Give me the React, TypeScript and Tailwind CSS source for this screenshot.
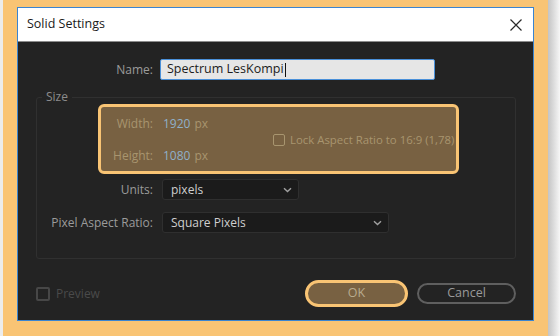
import React from "react"

const font = { fontFamily: '"Open Sans", "Noto Sans", Arial, sans-serif' }

function Chevron() {
  return (
    <svg width="9" height="6" viewBox="0 0 9 6" className="shrink-0">
      <path d="M1 1.2 L4.5 4.6 L8 1.2" fill="none" stroke="#a0a0a0" strokeWidth="1.4" />
    </svg>
  )
}

function Select({ value, width }: { value: string; width: string }) {
  return (
    <div
      className={`${width} h-[21px] flex items-center justify-between pl-[8px] pr-[6px] bg-[#1b1b1b] border border-[#2f2f2f] rounded-[3px] text-[12px] text-[#cfcfcf]`}
    >
      <span>{value}</span>
      <Chevron />
    </div>
  )
}

export default function App() {
  return (
    <div className="flex w-[560px] h-[336px] overflow-hidden" style={font}>
      <div className="w-[3px] bg-[#ececec]" />
      <div className="flex-1 bg-[#f9c474] pl-[14px] pt-[7px]">
        <div className="w-[517px] h-[314px] border border-[#3a84d0] flex flex-col">
          {/* title bar */}
          <div className="h-[34px] bg-white border-b border-[#8c8c8c] flex items-center justify-between pl-[9px] pr-[11px]">
            <span className="text-[12.5px] text-[#1a1a1a]">Solid Settings</span>
            <svg width="12" height="12" viewBox="0 0 12 12">
              <path d="M0.5 0.5 L11.5 11.5 M11.5 0.5 L0.5 11.5" stroke="#2a2a2a" strokeWidth="1.2" />
            </svg>
          </div>

          {/* body */}
          <div className="flex-1 bg-[#232323] flex flex-col pt-[17px] pl-[18px] pr-[17px]">
            <div className="flex items-center">
              <span className="w-[117px] text-right text-[12px] text-[#9b9b9b]">Name:</span>
              <div className="ml-[7px] w-[275px] h-[21px] flex items-center bg-[#e6e6e6] border border-[#4a90d9] rounded-[2px] pl-[6px] text-[12.5px] text-[#1c1c1c]">
                Spectrum LesKompi
                <span className="w-px h-[14px] bg-[#111] ml-[1px]" />
              </div>
            </div>

            <fieldset className="mt-[10px] w-[480px] border border-[#303030] rounded-[3px] pb-[25px]">
              <legend className="ml-[5px] px-[4px] text-[12px] leading-[14px] text-[#8c8c8c]">Size</legend>

              <div className="ml-[61px] w-[361px] h-[70px] border-[3px] border-[#f9c474] rounded-[6px] bg-[#786142] flex">
                <div className="w-[172px] shrink-0 flex flex-col gap-[16px] pt-[9px] text-[12px] leading-[16px]">
                  <div className="flex">
                    <span className="w-[52px] text-right text-[#a8956f]">Width:</span>
                    <span className="ml-[10px] text-[#8fb0c9]">1920</span>
                    <span className="ml-[4px] text-[#a8956f]">px</span>
                  </div>
                  <div className="flex">
                    <span className="w-[52px] text-right text-[#a8956f]">Height:</span>
                    <span className="ml-[10px] text-[#8fb0c9]">1080</span>
                    <span className="ml-[4px] text-[#a8956f]">px</span>
                  </div>
                </div>
                <div className="mt-[2px] flex items-center gap-[5px] whitespace-nowrap text-[11.4px] text-[#a8956f]">
                  <span className="w-[12px] h-[12px] shrink-0 border-[1.5px] border-[#a8956f] rounded-[2px]" />
                  <span>Lock Aspect Ratio to 16:9 (1,78)</span>
                </div>
              </div>

              <div className="mt-[5px] flex items-center">
                <span className="w-[116px] text-right text-[12px] text-[#9b9b9b]">Units:</span>
                <div className="ml-[9px]">
                  <Select value="pixels" width="w-[137px]" />
                </div>
              </div>
              <div className="mt-[12px] flex items-center">
                <span className="w-[116px] text-right text-[12px] text-[#9b9b9b]">Pixel Aspect Ratio:</span>
                <div className="ml-[9px]">
                  <Select value="Square Pixels" width="w-[227px]" />
                </div>
              </div>
            </fieldset>

            <div className="mt-[21px] flex items-center justify-between">
              <div className="flex items-center gap-[6px]">
                <span className="w-[14px] h-[14px] border-2 border-[#474747] rounded-[2px]" />
                <span className="text-[12px] text-[#4a4a4a]">Preview</span>
              </div>
              <div className="flex items-center gap-[9px]">
                <div className="w-[103px] h-[27px] border-[3px] border-[#f9c474] rounded-full bg-[#786142] flex items-center justify-center text-[12.5px] text-[#b9ab8e]">
                  OK
                </div>
                <div className="w-[99px] h-[21px] border-2 border-[#5f5f5f] rounded-full flex items-center justify-center text-[12.5px] text-[#9a9a9a]">
                  Cancel
                </div>
              </div>
            </div>
          </div>
        </div>
      </div>
      <div className="w-[12px] bg-linear-to-r from-[#c4c4c4] to-[#f7f7f7]" />
    </div>
  )
}
